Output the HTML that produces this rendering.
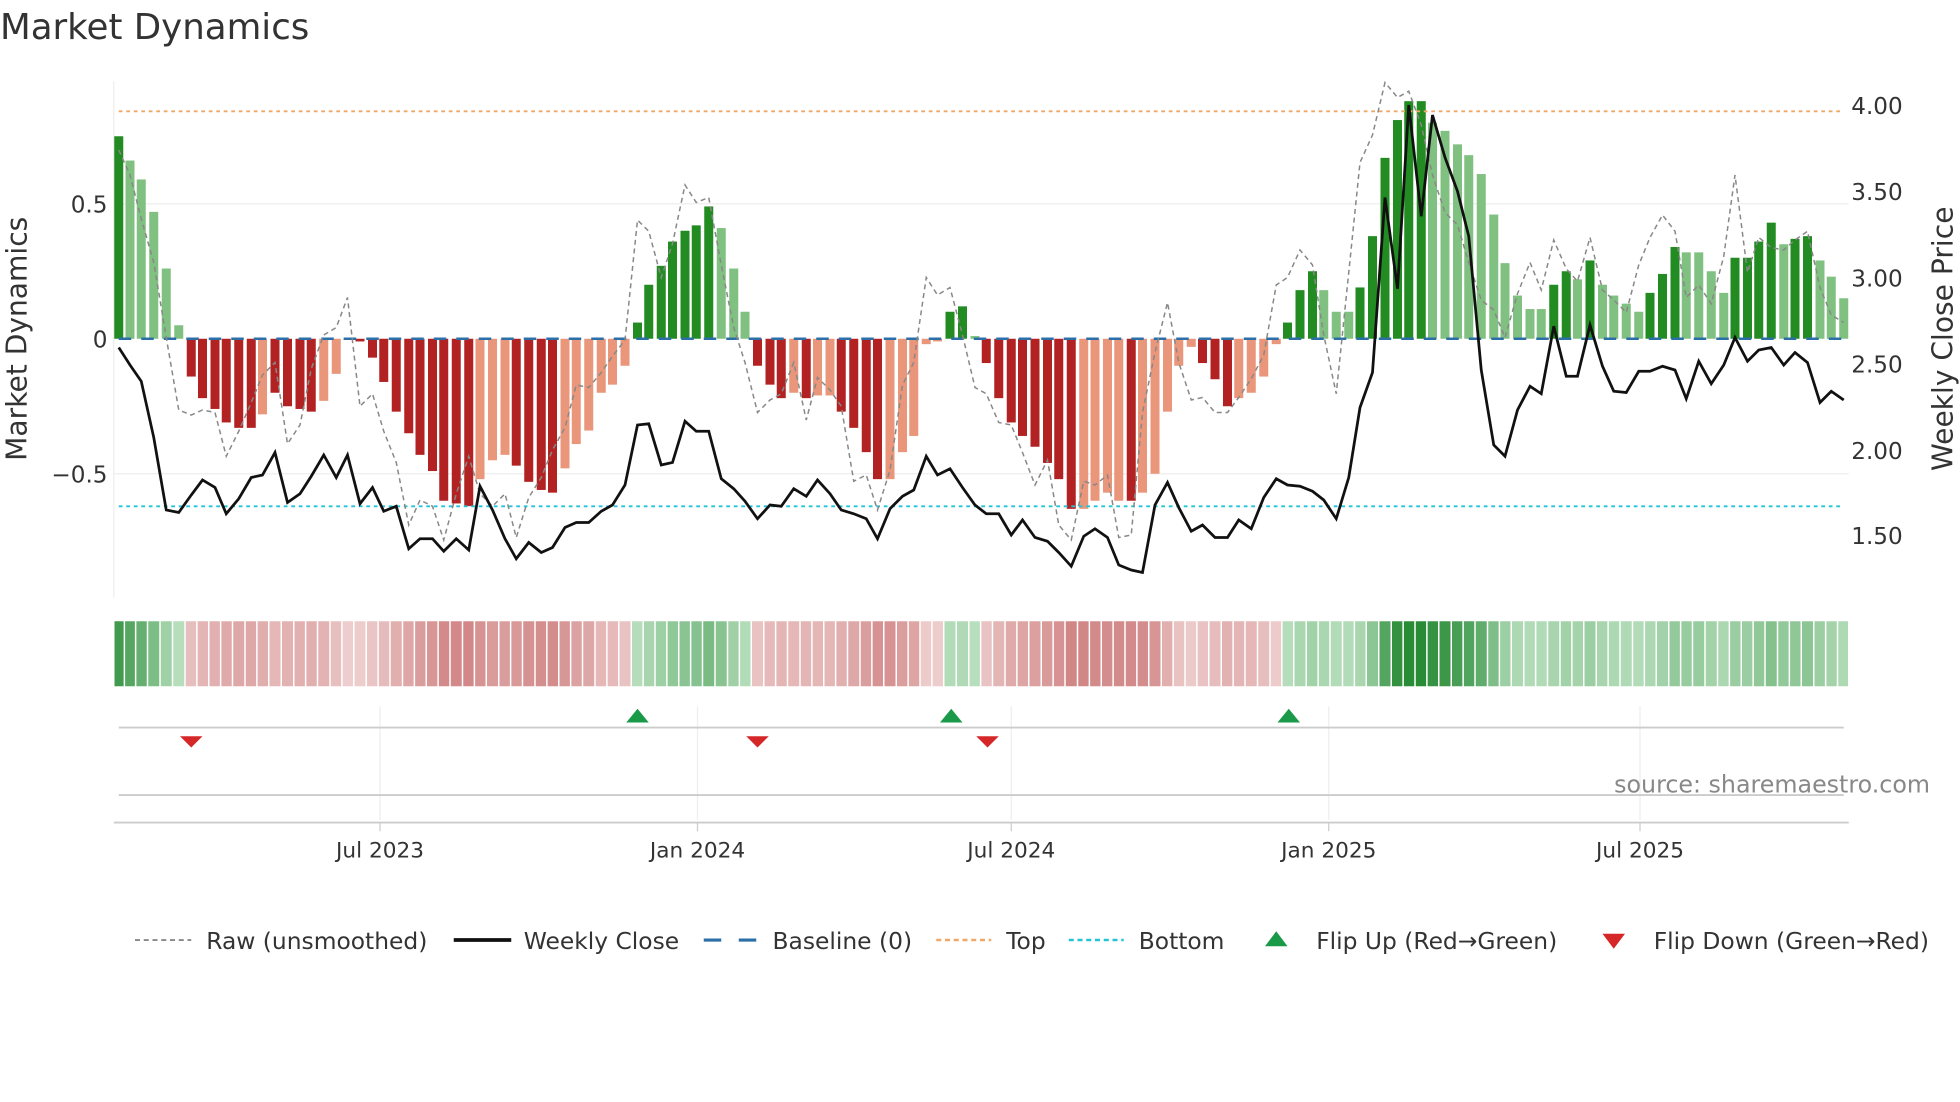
<!DOCTYPE html>
<html><head><meta charset="utf-8"><style>
html,body{margin:0;padding:0;background:#fff;width:1960px;height:1102px;overflow:hidden}
svg{display:block}
text{font-family:"DejaVu Sans","Liberation Sans",sans-serif;fill:#333}
</style></head><body>
<svg id="s" width="1960" height="1102" viewBox="0 0 1568 881.6" xmlns="http://www.w3.org/2000/svg">
<rect width="1568" height="882" fill="#fff"/>
<text x="0" y="31" font-size="28.5">Market Dynamics</text>
<line x1="91" y1="163" x2="1479" y2="163" stroke="#eee" stroke-width="1"/>
<line x1="91" y1="379" x2="1479" y2="379" stroke="#eee" stroke-width="1"/>
<line x1="91" y1="65" x2="91" y2="478" stroke="#eee" stroke-width="1"/>
<g id="bars"></g>
<line x1="95" y1="89" x2="1475" y2="89" stroke="#f0a868" stroke-width="1.5" stroke-dasharray="3,3"/>
<line x1="95" y1="405" x2="1475" y2="405" stroke="#22c4d8" stroke-width="1.5" stroke-dasharray="3,3"/>
<line x1="95" y1="271" x2="1475" y2="271" stroke="#2c6fa8" stroke-width="2" stroke-dasharray="10,8"/>
<polyline id="raw" fill="none" stroke="#888" stroke-width="1.2" stroke-dasharray="4,3"/>
<polyline id="close" fill="none" stroke="#111" stroke-width="2.2"/>
<g font-size="18.5" text-anchor="end">
<text x="86" y="170">0.5</text><text x="86" y="278">0</text><text x="86" y="386">−0.5</text>
</g>
<g font-size="18.5">
<text x="1481" y="91">4.00</text><text x="1481" y="160">3.50</text><text x="1481" y="229">3.00</text>
<text x="1481" y="298">2.50</text><text x="1481" y="367">2.00</text><text x="1481" y="435">1.50</text>
</g>
<text transform="translate(21,271) rotate(-90)" font-size="22.5" text-anchor="middle">Market Dynamics</text>
<text transform="translate(1562,271) rotate(-90)" font-size="22.5" text-anchor="middle">Weekly Close Price</text>
<g id="heat"></g>
<g stroke="#eee" stroke-width="1">
<line x1="304" y1="565" x2="304" y2="656"/><line x1="558" y1="565" x2="558" y2="656"/><line x1="809" y1="565" x2="809" y2="656"/><line x1="1063" y1="565" x2="1063" y2="656"/><line x1="1312" y1="565" x2="1312" y2="656"/>
</g>
<line x1="95" y1="582" x2="1475" y2="582" stroke="#ccc" stroke-width="1.5"/>
<line x1="95" y1="636" x2="1475" y2="636" stroke="#ccc" stroke-width="1.5"/>
<line x1="91" y1="658" x2="1479" y2="658" stroke="#ccc" stroke-width="1.5"/>
<g fill="#1a9a48"><path d="M501,578 L510,567 L519,578Z"/><path d="M752,578 L761,567 L770,578Z"/><path d="M1022,578 L1031,567 L1040,578Z"/></g>
<g fill="#d62728"><path d="M144,589 L162,589 L153,598Z"/><path d="M597,589 L615,589 L606,598Z"/><path d="M781,589 L799,589 L790,598Z"/></g>
<text x="1544" y="634" font-size="19" text-anchor="end" style="fill:#888">source: sharemaestro.com</text>
<g stroke="#ccc"><line x1="304" y1="658" x2="304" y2="665"/><line x1="558" y1="658" x2="558" y2="665"/><line x1="809" y1="658" x2="809" y2="665"/><line x1="1063" y1="658" x2="1063" y2="665"/><line x1="1312" y1="658" x2="1312" y2="665"/></g>
<g font-size="17.3" text-anchor="middle">
<text x="304" y="686">Jul 2023</text><text x="558" y="686">Jan 2024</text><text x="809" y="686">Jul 2024</text><text x="1063" y="686">Jan 2025</text><text x="1312" y="686">Jul 2025</text>
</g>
<g font-size="18.7">
<line x1="108" y1="752" x2="153" y2="752" stroke="#888" stroke-width="1.5" stroke-dasharray="4,3"/>
<text x="165" y="759">Raw (unsmoothed)</text>
<line x1="363" y1="752" x2="409" y2="752" stroke="#111" stroke-width="3"/>
<text x="419" y="759">Weekly Close</text>
<line x1="563" y1="752" x2="607" y2="752" stroke="#2c6fa8" stroke-width="2.5" stroke-dasharray="14,14"/>
<text x="618" y="759">Baseline (0)</text>
<line x1="749" y1="752" x2="793" y2="752" stroke="#f0a868" stroke-width="2" stroke-dasharray="4,3"/>
<text x="805" y="759">Top</text>
<line x1="855" y1="752" x2="899" y2="752" stroke="#22c4d8" stroke-width="2" stroke-dasharray="4,3"/>
<text x="911" y="759">Bottom</text>
<path d="M1012,757 L1021,745 L1030,757Z" fill="#1a9a48"/>
<text x="1053" y="759">Flip Up (Red→Green)</text>
<path d="M1282,747 L1300,747 L1291,759Z" fill="#d62728"/>
<text x="1323" y="759">Flip Down (Green→Red)</text>
</g>
</svg>
<script>
var NS="http://www.w3.org/2000/svg";
var bd=[[95,.75,'d'],[104,.66,'l'],[113,.59,'l'],[123,.47,'l'],[133,.26,'l'],[143,.05,'l'],[153,-.14,'d'],[162,-.22,'d'],[172,-.26,'d'],[181,-.31,'d'],[191,-.33,'d'],[201,-.33,'d'],[210,-.28,'l'],[220,-.2,'d'],[230,-.25,'d'],[240,-.26,'d'],[249,-.27,'d'],[259,-.23,'l'],[269,-.13,'l'],[278,0,'l'],[288,-.01,'d'],[298,-.07,'d'],[307,-.16,'d'],[317,-.27,'d'],[327,-.35,'d'],[336,-.43,'d'],[346,-.49,'d'],[355,-.6,'d'],[365,-.61,'d'],[375,-.62,'d'],[384,-.52,'l'],[394,-.45,'l'],[404,-.43,'l'],[413,-.47,'d'],[423,-.53,'d'],[433,-.56,'d'],[442,-.57,'d'],[452,-.48,'l'],[461,-.39,'l'],[471,-.34,'l'],[481,-.2,'l'],[490,-.17,'l'],[500,-.1,'l'],[510,.06,'d'],[519,.2,'d'],[529,.27,'d'],[538,.36,'d'],[548,.4,'d'],[557,.42,'d'],[567,.49,'d'],[577,.41,'l'],[587,.26,'l'],[596,.1,'l'],[606,-.1,'d'],[616,-.17,'d'],[625,-.22,'d'],[635,-.2,'l'],[645,-.22,'d'],[654,-.21,'l'],[664,-.21,'l'],[673,-.27,'d'],[683,-.33,'d'],[693,-.42,'d'],[702,-.52,'d'],[712,-.52,'l'],[722,-.42,'l'],[731,-.36,'l'],[741,-.02,'l'],[750,-.01,'l'],[760,.1,'d'],[770,.12,'d'],[780,.01,'l'],[789,-.09,'d'],[799,-.22,'d'],[809,-.31,'d'],[818,-.36,'d'],[828,-.4,'d'],[838,-.46,'d'],[847,-.52,'d'],[857,-.63,'d'],[867,-.63,'l'],[876,-.6,'l'],[886,-.57,'l'],[895,-.6,'l'],[905,-.6,'d'],[914,-.57,'l'],[924,-.5,'l'],[934,-.27,'l'],[943,-.1,'l'],[953,-.03,'l'],[962,-.09,'d'],[972,-.15,'d'],[982,-.25,'d'],[991,-.22,'l'],[1001,-.2,'l'],[1011,-.14,'l'],[1021,-.02,'l'],[1030,.06,'d'],[1040,.18,'d'],[1050,.25,'d'],[1059,.18,'l'],[1069,.1,'l'],[1079,.1,'l'],[1088,.19,'d'],[1098,.38,'d'],[1108,.67,'d'],[1118,.81,'d'],[1127,.88,'d'],[1137,.88,'d'],[1146,.8,'l'],[1156,.77,'l'],[1166,.72,'l'],[1175,.68,'l'],[1185,.61,'l'],[1195,.46,'l'],[1204,.28,'l'],[1214,.16,'l'],[1224,.11,'l'],[1233,.11,'l'],[1243,.2,'d'],[1253,.25,'d'],[1262,.22,'l'],[1272,.29,'d'],[1282,.2,'l'],[1291,.16,'l'],[1301,.13,'l'],[1311,.1,'l'],[1320,.17,'d'],[1330,.24,'d'],[1340,.34,'d'],[1349,.32,'l'],[1359,.32,'l'],[1369,.25,'l'],[1379,.17,'l'],[1388,.3,'d'],[1398,.3,'d'],[1407,.36,'d'],[1417,.43,'d'],[1427,.35,'l'],[1436,.37,'d'],[1446,.38,'d'],[1456,.29,'l'],[1465,.23,'l'],[1475,.15,'l']];
var g=document.getElementById('bars'),h=document.getElementById('heat');
function mix(a,b,t){return 'rgb('+[0,1,2].map(function(i){return Math.round(a[i]+(b[i]-a[i])*t)}).join(',')+')'}
bd.forEach(function(b,i){
 var x=b[0],v=b[1],hgt=Math.abs(v)*216,y=v>=0?271-hgt:271;
 var c=v>=0?(b[2]=='d'?'#228b22':'#80c080'):(b[2]=='d'?'#b22222':'#e9967a');
 var r=document.createElementNS(NS,'rect');r.setAttribute('x',x-3.6);r.setAttribute('y',y);r.setAttribute('width',7.2);r.setAttribute('height',Math.max(hgt,0.6));r.setAttribute('fill',c);g.appendChild(r);
 var t=Math.min(1,Math.abs(v)/0.85);
 var hc=v>0?mix([200,232,204],[40,140,55],0.1+0.9*Math.pow(t,1.5)):mix([244,222,222],[200,110,110],0.15+0.85*t);
 var x0=i==0?91:(bd[i-1][0]+x)/2, x1=i==bd.length-1?1479:(bd[i+1][0]+x)/2;
 var q=document.createElementNS(NS,'rect');q.setAttribute('x',x0+0.6);q.setAttribute('y',497);q.setAttribute('width',x1-x0-1.2);q.setAttribute('height',52);q.setAttribute('fill',hc);h.appendChild(q);
});
var cl=[278,292,305,350,408,410,396,384,390,411,399,382,380,362,402,395,381,364,382,364,403,390,409,405,439,431,431,441,431,440,389,408,431,447,434,442,438,422,418,418,409,404,388,340,339,372,370,337,345,345,383,391,401,415,404,405,391,397,384,395,408,411,415,431,407,397,392,365,380,375,390,404,411,411,428,416,430,433,442,453,429,423,430,452,456,458,404,386,406,425,420,430,430,416,423,398,383,388,389,393,400,415,382,326,298,158,231,84,173,92,126,153,189,296,356,365,328,309,315,261,301,301,260,293,313,314,297,297,293,296,319,289,307,292,270,289,280,278,292,282,290,322,313,320];
var rw=[120,140,175,210,270,328,332,328,330,365,345,322,300,290,355,340,295,268,262,238,325,315,345,370,420,400,405,432,395,365,395,405,395,430,398,382,360,342,308,310,298,285,272,176,185,222,195,148,162,158,212,262,290,330,320,315,290,336,302,312,325,385,380,408,376,308,290,222,236,230,268,310,315,338,340,362,388,368,420,432,385,388,380,430,428,330,282,242,290,320,318,330,330,318,303,284,228,222,200,212,268,315,218,130,108,66,78,73,100,140,170,180,210,240,248,270,235,210,232,192,215,225,190,232,240,250,212,190,172,185,238,228,243,205,140,218,190,198,200,192,185,230,252,258];
document.getElementById('close').setAttribute('points',bd.map(function(b,i){return b[0]+','+cl[i]}).join(' '));
document.getElementById('raw').setAttribute('points',bd.map(function(b,i){return b[0]+','+rw[i]}).join(' '));
</script>
</body></html>
